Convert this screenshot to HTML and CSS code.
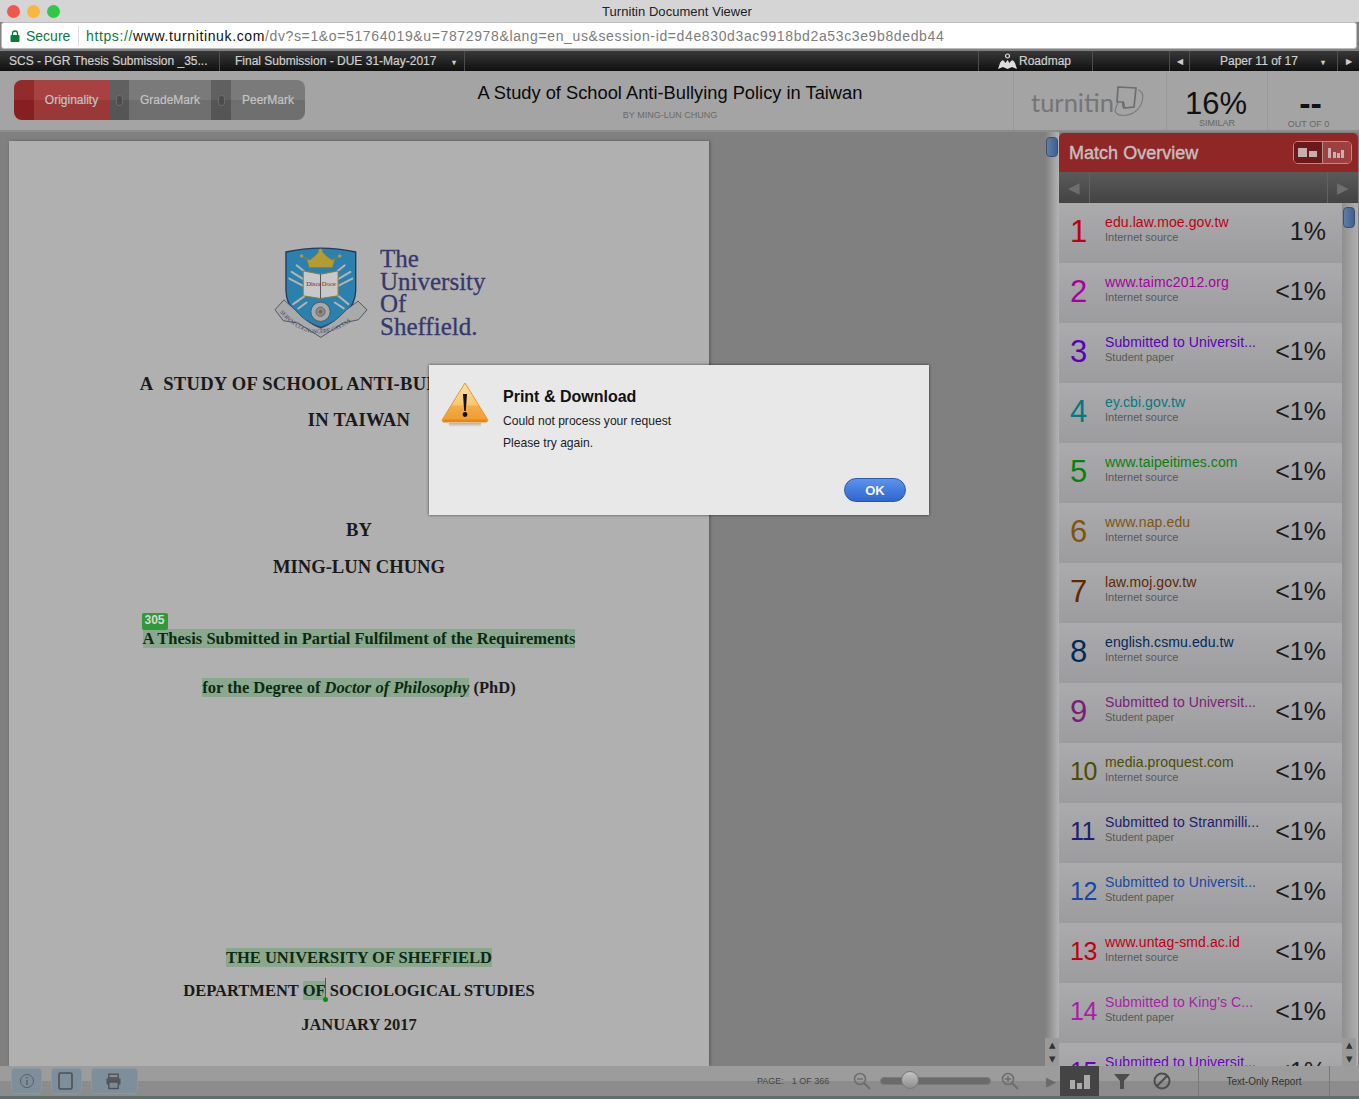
FILE: index.html
```html
<html>
<head>
  <title>Turnitin Document Viewer</title>
  <link rel="stylesheet" href="styles.css">
</head>
<body>
  <div class="titlebar">
    <div class="lights"><span class="light red"></span><span class="light yellow"></span><span class="light green"></span></div>
    <div class="window-title">Turnitin Document Viewer</div>
  </div>
  <div class="urlbar">
    <svg class="lock" width="10" height="12" viewBox="0 0 10 12"><path d="M2.5 5V3.5a2.5 2.5 0 0 1 5 0V5" fill="none" stroke="#0b7a3e" stroke-width="1.3"/><rect x="0.5" y="5" width="9" height="7" rx="1" fill="#0b7a3e"/></svg>
    <span class="secure">Secure</span>
    <span class="url"><span class="scheme">https://</span><span class="host">www.turnitinuk.com</span>/dv?s=1&amp;o=51764019&amp;u=7872978&amp;lang=en_us&amp;session-id=d4e830d3ac9918bd2a53c3e9b8dedb44</span>
  </div>

  <div class="navbar">
    <div class="nav-cell class-cell">SCS - PGR Thesis Submission _35...</div>
    <div class="nav-cell assign-cell">Final Submission - DUE 31-May-2017<span class="caret">&#9662;</span></div>
    <div class="nav-fill"></div>
    <div class="nav-cell roadmap-cell">
      <svg width="19" height="16" viewBox="0 0 19 16"><circle cx="9.5" cy="3" r="2" fill="none" stroke="#ddd" stroke-width="1.2"/><path d="M0 16 2 10Q4 6 6 8L7.5 10 9.5 7 11.5 10 13 8Q15 6 17 10L19 16 14 14 9.5 16 5 14z" fill="#ddd"/></svg>
      Roadmap
    </div>
    <div class="nav-cell prev-cell">&#9666;</div>
    <div class="nav-cell paper-cell">Paper 11 of 17<span class="caret caret-paper">&#9662;</span></div>
    <div class="nav-cell next-cell">&#9656;</div>
  </div>

  <div class="header">
    <div class="tabs">
      <div class="tab-handle red-handle"></div>
      <div class="tab tab-on tab-orig">Originality</div>
      <div class="tab-handle"><span class="slot"></span></div>
      <div class="tab tab-grade">GradeMark</div>
      <div class="tab-handle"><span class="slot"></span></div>
      <div class="tab tab-peer">PeerMark</div>
    </div>
    <div class="doc-title">
      <div class="doc-name">A Study of School Anti-Bullying Policy in Taiwan</div>
      <div class="doc-author">BY MING-LUN CHUNG</div>
    </div>
    <div class="brand">
      <span class="brand-name">turnitin</span>
      <svg class="brand-mark" width="45" height="45" viewBox="0 0 45 45">
        <path d="M8 7 26 8 24 27 14 28 13 22 7 22z" fill="none" stroke="#6e6e6e" stroke-width="1.7"/>
        <path d="M13 22 14 28" stroke="#6e6e6e" stroke-width="2.4"/>
        <path d="M28 10C36 12 33 25 26 31 18 37 7 37 5 31 5 28 7 25 8 23" fill="none" stroke="#7c7c7c" stroke-width="1.2"/>
      </svg>
    </div>
    <div class="score score-sim"><div class="score-num">16%</div><div class="score-label">SIMILAR</div></div>
    <div class="score score-grade"><div class="score-num bold-num">--</div><div class="score-label">OUT OF 0</div></div>
  </div>

  <div class="main">
    <div class="viewer">
      <div class="page">
        <div class="logo">
          <svg class="crest" width="97" height="93" viewBox="40 30 290 280">
            <path d="M78 48Q183 25 288 48V165Q285 240 183 276 80 240 78 165z" fill="#2b80ad" stroke="#23385f" stroke-width="4"/>
            <path d="M148 95 140 66 120 60 150 72 165 60 182 42 200 60 216 72 246 60 226 66 218 95z" fill="#b59c32" stroke="#8a7a2a" stroke-width="2"/>
            <circle cx="125" cy="60" r="5" fill="#b59c32"/>
            <circle cx="240" cy="60" r="5" fill="#b59c32"/>
            <circle cx="182" cy="44" r="6" fill="#b59c32"/>
            <g stroke="#b4b4b4" stroke-width="6" stroke-linecap="round">
              <path d="M110 88 140 112M95 108 130 130M88 128 130 150M255 88 225 112M272 108 235 130M278 128 235 150M100 205 135 180M115 218 140 200M266 205 235 180M252 218 225 200"/>
            </g>
            <path d="M130 105 182 115 235 105V180L182 188 130 180z" fill="#c8c8c8" stroke="#8e7b34" stroke-width="3"/>
            <path d="M182 115V188" stroke="#555" stroke-width="3"/>
            <text x="139" y="150" class="crest-motto">Disce</text>
            <text x="186" y="150" class="crest-motto">Doce</text>
            <circle cx="182" cy="228" r="29" fill="#a9a9a9" stroke="#444" stroke-width="2"/>
            <circle cx="182" cy="228" r="14" fill="#8a8a8a" stroke="#555" stroke-width="2"/>
            <circle cx="182" cy="228" r="5" fill="#6a6a3a"/>
            <path d="M45 222 72 192 105 222Q140 262 183 278 225 262 260 222L295 196 322 222 296 252 250 262Q215 285 183 305 150 285 115 262L70 255z" fill="#aaa" stroke="#3d4560" stroke-width="2.5"/>
            <path id="ribbon" d="M55 225Q120 300 183 292 250 290 312 222" fill="none"/>
            <text class="crest-ribbon"><textPath href="#ribbon" startOffset="2%">SERVM COGNOSCERE CAVSAS</textPath></text>
          </svg>
          <div class="logo-name">The<br>University<br>Of<br>Sheffield.</div>
        </div>

        <div class="doc-line wide-line gap-title">A&nbsp; STUDY OF SCHOOL ANTI-BULLYING POLICY</div>
        <div class="doc-line wide-line gap-12">IN TAIWAN</div>
        <div class="doc-line gap-by">BY</div>
        <div class="doc-line gap-13">MING-LUN CHUNG</div>
        <div class="doc-line small-line gap-thesis"><span class="hit thesis-hit"><span class="badge">305</span>A Thesis Submitted in Partial Fulfilment of the Requirements</span></div>
        <div class="doc-line small-line gap-degree"><span class="hit">for the Degree of <i>Doctor of Philosophy</i></span> (PhD)</div>
        <div class="doc-line small-line gap-uni"><span class="hit">THE UNIVERSITY OF SHEFFIELD</span></div>
        <div class="doc-line small-line gap-9">DEPARTMENT <span class="hit of-hit">OF<span class="pin"></span></span> SOCIOLOGICAL STUDIES</div>
        <div class="doc-line small-line gap-10">JANUARY 2017</div>
      </div>
    </div>

    <div class="vscroll">
      <div class="thumb"></div>
      <div class="scroll-btns"><div class="scroll-btn">&#9652;</div><div class="scroll-btn">&#9662;</div></div>
    </div>

    <div class="sidebar">
      <div class="side-head">
        <span class="side-title">Match Overview</span>
        <div class="view-toggle">
          <div class="toggle-btn toggle-on">
            <svg width="20" height="9" viewBox="0 0 20 9"><rect x="0" y="0" width="9" height="9" fill="#c4b0b0"/><rect x="11" y="3" width="8" height="6" fill="#c4b0b0"/></svg>
          </div>
          <div class="toggle-btn">
            <svg width="20" height="10" viewBox="0 0 20 10"><path d="M1 0h3v10H1zM6 4h3v6H6zM10 5h3v5h-3zM14 2h3v8h-3z" fill="#c8b0b0"/></svg>
          </div>
        </div>
      </div>
      <div class="side-pager">
        <span class="pager-arrow">&#9664;</span>
        <span class="pager-mid"></span>
        <span class="pager-arrow">&#9654;</span>
      </div>
      <div class="side-body">
        <div class="matches">
          <div class="match c1"><span class="match-num">1</span><div class="match-text"><div class="match-title">edu.law.moe.gov.tw</div><div class="match-type">Internet source</div></div><span class="match-pct">1%</span></div>
          <div class="match c2"><span class="match-num">2</span><div class="match-text"><div class="match-title">www.taimc2012.org</div><div class="match-type">Internet source</div></div><span class="match-pct">&lt;1%</span></div>
          <div class="match c3"><span class="match-num">3</span><div class="match-text"><div class="match-title">Submitted to Universit...</div><div class="match-type">Student paper</div></div><span class="match-pct">&lt;1%</span></div>
          <div class="match c4"><span class="match-num">4</span><div class="match-text"><div class="match-title">ey.cbi.gov.tw</div><div class="match-type">Internet source</div></div><span class="match-pct">&lt;1%</span></div>
          <div class="match c5"><span class="match-num">5</span><div class="match-text"><div class="match-title">www.taipeitimes.com</div><div class="match-type">Internet source</div></div><span class="match-pct">&lt;1%</span></div>
          <div class="match c6"><span class="match-num">6</span><div class="match-text"><div class="match-title">www.nap.edu</div><div class="match-type">Internet source</div></div><span class="match-pct">&lt;1%</span></div>
          <div class="match c7"><span class="match-num">7</span><div class="match-text"><div class="match-title">law.moj.gov.tw</div><div class="match-type">Internet source</div></div><span class="match-pct">&lt;1%</span></div>
          <div class="match c8"><span class="match-num">8</span><div class="match-text"><div class="match-title">english.csmu.edu.tw</div><div class="match-type">Internet source</div></div><span class="match-pct">&lt;1%</span></div>
          <div class="match c9"><span class="match-num">9</span><div class="match-text"><div class="match-title">Submitted to Universit...</div><div class="match-type">Student paper</div></div><span class="match-pct">&lt;1%</span></div>
          <div class="match c10"><span class="match-num two-digit">10</span><div class="match-text"><div class="match-title">media.proquest.com</div><div class="match-type">Internet source</div></div><span class="match-pct">&lt;1%</span></div>
          <div class="match c11"><span class="match-num two-digit">11</span><div class="match-text"><div class="match-title">Submitted to Stranmilli...</div><div class="match-type">Student paper</div></div><span class="match-pct">&lt;1%</span></div>
          <div class="match c12"><span class="match-num two-digit">12</span><div class="match-text"><div class="match-title">Submitted to Universit...</div><div class="match-type">Student paper</div></div><span class="match-pct">&lt;1%</span></div>
          <div class="match c13"><span class="match-num two-digit">13</span><div class="match-text"><div class="match-title">www.untag-smd.ac.id</div><div class="match-type">Internet source</div></div><span class="match-pct">&lt;1%</span></div>
          <div class="match c14"><span class="match-num two-digit">14</span><div class="match-text"><div class="match-title">Submitted to King's C...</div><div class="match-type">Student paper</div></div><span class="match-pct">&lt;1%</span></div>
          <div class="match c15"><span class="match-num two-digit">15</span><div class="match-text"><div class="match-title">Submitted to Universit...</div><div class="match-type">Student paper</div></div><span class="match-pct">&lt;1%</span></div>
        </div>
        <div class="side-scroll">
          <div class="thumb side-thumb"></div>
          <div class="scroll-btns"><div class="scroll-btn">&#9652;</div><div class="scroll-btn">&#9662;</div></div>
        </div>
      </div>
    </div>
  </div>

  <div class="footer">
    <div class="foot-btn foot-info">
      <svg width="16" height="16" viewBox="0 0 16 16"><circle cx="8" cy="8" r="6.5" fill="none" stroke="#5a5f63" stroke-width="1"/><path d="M8 4v1.5M8 7v5" stroke="#5a5f63" stroke-width="1.4"/></svg>
    </div>
    <div class="foot-btn foot-tablet">
      <svg width="15" height="18" viewBox="0 0 15 18"><rect x="1" y="1" width="13" height="16" rx="1.5" fill="none" stroke="#4d4f52" stroke-width="1.6"/></svg>
    </div>
    <div class="foot-btn foot-print">
      <svg width="15" height="17" viewBox="0 0 16 17"><rect x="3" y="0.7" width="10" height="4" fill="none" stroke="#4d4f52" stroke-width="1.4"/><rect x="0.5" y="5" width="15" height="7" rx="1" fill="#55575a"/><rect x="3" y="9" width="10" height="7" fill="#7d8891" stroke="#4d4f52" stroke-width="1.4"/></svg>
    </div>
    <div class="page-count"><span class="page-label">PAGE:</span>1 OF 366</div>
    <svg class="zoom-out" width="18" height="18" viewBox="0 0 18 18"><circle cx="7" cy="7" r="5.5" fill="none" stroke="#6e6e6e" stroke-width="1.6"/><path d="M4 7h6" stroke="#6e6e6e" stroke-width="1.4"/><path d="M11 11l6 6" stroke="#6e6e6e" stroke-width="2"/></svg>
    <div class="slider"><span class="knob"></span></div>
    <svg class="zoom-in" width="18" height="18" viewBox="0 0 18 18"><circle cx="7" cy="7" r="5.5" fill="none" stroke="#6e6e6e" stroke-width="1.6"/><path d="M4 7h6M7 4v6" stroke="#6e6e6e" stroke-width="1.4"/><path d="M11 11l6 6" stroke="#6e6e6e" stroke-width="2"/></svg>
    <div class="foot-arrow">&#9654;</div>
    <div class="foot-tool foot-active">
      <svg width="20" height="16" viewBox="0 0 20 16"><path d="M0 7h5v9H0zM7 10h5v6H7zM14 2h6v14h-6z" fill="#aaa"/></svg>
    </div>
    <div class="foot-tool tool-filter">
      <svg width="16" height="15" viewBox="0 0 16 15"><path d="M0 0h16L10 7v8H6V7z" fill="#4d4d4d"/></svg>
    </div>
    <div class="foot-tool tool-block">
      <svg width="18" height="18" viewBox="0 0 18 18"><circle cx="9" cy="9" r="7.5" fill="none" stroke="#4d4d4d" stroke-width="2"/><path d="M4 14 14 4" stroke="#4d4d4d" stroke-width="2"/></svg>
    </div>
    <div class="text-report">Text-Only Report</div>
  </div>
  <div class="footer-strip"></div>

  <div class="dialog">
    <svg class="warn" width="48" height="46" viewBox="0 0 48 46">
      <defs>
        <linearGradient id="warnFill" x1="0" y1="0" x2="0" y2="1"><stop offset="0" stop-color="#fce3a4"/><stop offset="0.55" stop-color="#f8c870"/><stop offset="0.6" stop-color="#f4ad48"/><stop offset="1" stop-color="#f09a2c"/></linearGradient>
        <linearGradient id="warnShade" x1="0" y1="0" x2="0" y2="1"><stop offset="0" stop-color="#999" stop-opacity="0.7"/><stop offset="1" stop-color="#999" stop-opacity="0"/></linearGradient>
      </defs>
      <rect x="8" y="41" width="32" height="4" fill="url(#warnShade)"/>
      <path d="M24 1 46.6 37.5a1.6 1.6 0 0 1-1.4 2.5H2.8a1.6 1.6 0 0 1-1.4-2.5z" fill="url(#warnFill)" stroke="#e8952c" stroke-width="1"/>
      <path d="M2 37.5h44l-.8 2.5H2.8z" fill="#e6851c"/>
      <path d="M22 12h4L24.8 29h-1.6z" fill="#111"/>
      <circle cx="24" cy="32.5" r="2.4" fill="#111"/>
    </svg>
    <div class="dialog-text">
      <div class="dialog-title">Print &amp; Download</div>
      <div class="dialog-msg">Could not process your request</div>
      <div class="dialog-msg">Please try again.</div>
    </div>
    <button class="ok-btn">OK</button>
  </div>
</body>
</html>
```

FILE: styles.css
```css
* {
  box-sizing: border-box;
}

body {
  margin: 0;
  width: 1359px;
  height: 1099px;
  overflow: hidden;
  display: flex;
  flex-direction: column;
  background: #808080;
  font-family: "Liberation Sans", Arial, sans-serif;
  color: #111;
}

/* window chrome */
.titlebar {
  height: 22px;
  flex: none;
  display: flex;
  align-items: center;
  background: #d5d5d5;
}

.lights {
  display: flex;
  gap: 7px;
  padding-left: 7px;
}

.light {
  width: 13px;
  height: 13px;
  border-radius: 50%;
}

.red { background: #f2544e; }
.yellow { background: #f6b73c; }
.green { background: #33c748; }

.window-title {
  width: 1234px;
  text-align: center;
  font-size: 13px;
  letter-spacing: 0.04px;
  color: #222;
}

.urlbar {
  height: 27px;
  flex: none;
  margin: 0 2px 2px 1px;
  padding-left: 8px;
  display: flex;
  align-items: center;
  background: #fff;
  border: 1px solid #bdbdbd;
  border-radius: 3px;
  font-size: 14px;
}

.lock {
  margin-right: 6px;
}

.secure {
  color: #0b7a3e;
  width: 53px;
  padding-right: 7px;
  border-right: 1px solid #ddd;
  margin-right: 7px;
  line-height: 20px;
}

.url {
  color: #7d7d7d;
  letter-spacing: 0.63px;
  white-space: nowrap;
}

.scheme { color: #0b7a3e; }
.host { color: #111; }

.navbar {
  height: 20px;
  flex: none;
  display: flex;
  background: linear-gradient(#383838, #101010);
  color: #cfcfcf;
  font-size: 12px;
  line-height: 20px;
  -webkit-text-stroke: 0.2px #cfcfcf;
}

.nav-cell {
  flex: none;
  border-right: 1px solid #4d4d4d;
  white-space: nowrap;
}

.nav-fill { flex: 1; }
.class-cell { width: 220px; padding-left: 9px; }
.assign-cell { width: 245px; padding-left: 15px; }
.roadmap-cell { width: 115px; padding-left: 19px; display: flex; align-items: center; gap: 2px; border-left: 1px solid #4d4d4d; }
.prev-cell { width: 21px; text-align: center; font-size: 12px; margin-left: 76px; border-left: 1px solid #4d4d4d; }
.paper-cell { width: 148px; padding-left: 30px; }
.next-cell { width: 21px; text-align: center; font-size: 12px; border-right: 0; }

.caret {
  font-size: 8px;
  margin-left: 16px;
}

.caret-paper {
  margin-left: 23px;
}

/* document header */
.header {
  height: 61px;
  flex: none;
  display: flex;
  background: #a4a4a4;
  border-bottom: 2px solid #8c8c8c;
}

.tabs {
  width: 291px;
  height: 40px;
  flex: none;
  margin: 9px 0 0 14px;
  display: flex;
  border-radius: 8px;
  overflow: hidden;
  font-size: 12px;
  color: #c4c4c4;
  -webkit-text-stroke: 0.2px #c4c4c4;
}

.tab,
.tab-handle {
  background-image: linear-gradient(rgba(255, 255, 255, 0.04) 50%, rgba(0, 0, 0, 0.06) 50%);
}

.tab {
  line-height: 40px;
  text-align: center;
  background-color: #757575;
}

.tab-handle {
  width: 20px;
  flex: none;
  background-color: #5a5a5a;
  display: flex;
  align-items: center;
  justify-content: center;
}

.red-handle { background-color: #8e2222; }
.tab-on { background-color: #a43a3a; }
.tab-orig { width: 75px; }
.tab-grade { width: 82px; }
.tab-peer { width: 74px; }

.slot {
  width: 7px;
  height: 11px;
  border-radius: 3px;
  background: #4c4c4c;
  border: 1px solid #6c6c6c;
}

.doc-title {
  width: 708px;
  flex: none;
  text-align: center;
  padding: 11px 0 0 22px;
}

.doc-name {
  font-size: 18.3px;
  line-height: 22px;
  color: #0a0a0a;
}

.doc-author {
  font-size: 9px;
  color: #6a6a6a;
  margin-top: 6px;
}

.brand {
  width: 153px;
  flex: none;
  border-left: 1px solid #999;
  display: flex;
  align-items: flex-start;
  padding: 16px 0 0 17px;
}

.brand-name {
  width: 79px;
  flex: none;
  font-family: Lato, "Liberation Sans", sans-serif;
  font-size: 25.5px;
  color: #757575;
  line-height: 30px;
}

.brand-mark {
  flex: none;
  margin-top: -7px;
}

.score {
  flex: none;
  border-left: 1px solid #999;
  text-align: center;
}

.score-sim { width: 101px; padding: 16px 2px 0 0; }
.score-grade { width: 82px; padding-top: 15px; }

.score-num {
  font-size: 31px;
  line-height: 34px;
  color: #111;
}

.bold-num {
  font-size: 34px;
  font-weight: bold;
  padding-left: 4px;
}

.score-label {
  font-size: 9px;
  color: #666;
  line-height: 10px;
  margin-top: -1px;
}

.score-sim .score-label {
  margin-top: -3px;
  padding-left: 2px;
}

/* body */
.main {
  flex: 1;
  display: flex;
  min-height: 0;
}

.viewer {
  width: 1045px;
  flex: none;
  padding: 9px 0 0 9px;
  background: #808080;
  overflow: hidden;
}

.page {
  width: 700px;
  height: 925px;
  background: #b0b0b0;
  box-shadow: 1px 0 3px #555;
  font-family: "Liberation Serif", "Times New Roman", serif;
  font-weight: bold;
  color: #1a1a1a;
  text-align: center;
}

.logo {
  display: flex;
  padding: 105px 0 0 264px;
  text-align: left;
  font-weight: normal;
}

.crest {
  flex: none;
}

.crest-motto {
  font-size: 20px;
  fill: #8a2020;
  font-family: "Liberation Serif", serif;
}

.crest-ribbon {
  font-size: 17px;
  fill: #3d4560;
  font-family: "Liberation Serif", serif;
}

.logo-name {
  margin: 2px 0 0 10px;
  font-size: 25px;
  line-height: 22.7px;
  color: #38386c;
  -webkit-text-stroke: 0.3px #38386c;
}

.doc-line {
  height: 24px;
  line-height: 24px;
  font-size: 18.6px;
  white-space: nowrap;
}

.wide-line { letter-spacing: 0.25px; }
.small-line { font-size: 16.5px; }

.gap-title { margin-top: 33px; }
.gap-12 { margin-top: 12px; }
.gap-by { margin-top: 86px; }
.gap-13 { margin-top: 13px; }
.gap-thesis { margin-top: 48px; }
.gap-degree { margin-top: 25px; }
.gap-uni { margin-top: 246px; }
.gap-9 { margin-top: 9px; }
.gap-10 { margin-top: 10px; }

.hit {
  background: #8ba88e;
  color: #0c2a12;
  position: relative;
}

.badge {
  position: absolute;
  left: -1px;
  top: -16px;
  width: 26px;
  height: 17px;
  background: #2f9a38;
  border-radius: 2px;
  color: #d8d8d8;
  font-family: "Liberation Sans", Arial, sans-serif;
  font-size: 12px;
  line-height: 15px;
}

.pin {
  position: absolute;
  right: 0;
  top: -3px;
  width: 1px;
  height: 22px;
  background: #0a8a1a;
}

.pin::after {
  content: "";
  position: absolute;
  left: -2px;
  bottom: -2px;
  width: 5px;
  height: 5px;
  border-radius: 50%;
  background: #0a8a1a;
}

.vscroll {
  width: 14px;
  flex: none;
  display: flex;
  flex-direction: column;
  align-items: center;
  padding-top: 5px;
  background: linear-gradient(90deg, #7f7f7f, #b4b4b4);
}

.thumb {
  width: 12px;
  height: 20px;
  flex: none;
  border-radius: 4px;
  background: linear-gradient(90deg, #5f7ea8, #3f5f8e);
  border: 1px solid #3c4f6c;
}

.scroll-btns {
  margin-top: auto;
  width: 100%;
}

.scroll-btn {
  height: 14px;
  line-height: 14px;
  font-size: 13px;
  text-align: center;
  color: #333;
  background: #9a9a9a;
}

/* match overview */
.sidebar {
  width: 300px;
  flex: none;
  display: flex;
  flex-direction: column;
  min-height: 0;
  padding-top: 1px;
  background: #808080;
}

.side-head {
  height: 39px;
  flex: none;
  display: flex;
  align-items: center;
  justify-content: space-between;
  padding: 0 6px 0 10px;
  margin-right: 1px;
  background: #8f2727;
  border-radius: 5px 5px 0 0;
}

.side-title {
  font-size: 18px;
  line-height: 22px;
  padding-top: 1px;
  letter-spacing: 0.02px;
  color: #c4c0c0;
  -webkit-text-stroke: 0.4px #c4c0c0;
}

.view-toggle {
  display: flex;
  width: 59px;
  height: 23px;
  border: 1px solid #b88c8c;
  border-radius: 5px;
  overflow: hidden;
}

.toggle-btn {
  flex: 1;
  display: flex;
  align-items: center;
  justify-content: center;
  background: #9c4040;
}

.toggle-on {
  background: #6a1a1a;
  border-right: 1px solid #b88c8c;
}

.side-pager {
  height: 31px;
  flex: none;
  margin-right: 1px;
  display: flex;
  align-items: center;
  background: linear-gradient(#5a5a5a, #434343);
  color: #6e6e6e;
  font-size: 15px;
}

.pager-arrow {
  width: 30px;
  text-align: center;
  line-height: 31px;
}

.pager-mid {
  flex: 1;
  height: 31px;
  border: solid #626262;
  border-width: 0 1px;
}

.side-body {
  flex: 1;
  display: flex;
  min-height: 0;
}

.matches {
  width: 283px;
  flex: none;
  overflow: hidden;
}

.match {
  height: 60px;
  display: flex;
  align-items: center;
  background: linear-gradient(#ababad, #9c9c9e);
}

.match-num {
  width: 46px;
  flex: none;
  padding: 0 0 3px 11px;
  font-size: 31px;
  letter-spacing: -0.5px;
}

.match-num.two-digit {
  font-size: 25px;
}

.match-text {
  width: 155px;
  flex: none;
  padding-bottom: 8px;
}

.match-title {
  font-size: 14px;
  line-height: 16px;
  letter-spacing: 0.1px;
  white-space: nowrap;
}

.match-type {
  font-size: 11px;
  line-height: 14px;
  color: #585858;
}

.match-pct {
  flex: 1;
  text-align: right;
  padding: 0 16px 4px 0;
  font-size: 25px;
  color: #1c1c1c;
}

.c1 { color: #c00010; }
.c2 { color: #a800a0; }
.c3 { color: #5a00b8; }
.c4 { color: #007a84; }
.c5 { color: #0a800a; }
.c6 { color: #80540f; }
.c7 { color: #602800; }
.c8 { color: #002a5a; }
.c9 { color: #781e78; }
.c10 { color: #4c4c00; }
.c11 { color: #20206a; }
.c12 { color: #1a46a0; }
.c13 { color: #c00010; }
.c14 { color: #a81ea8; }
.c15 { color: #6a00c8; }

.side-scroll {
  width: 16px;
  flex: none;
  display: flex;
  flex-direction: column;
  align-items: center;
  padding: 4px 2px 0 0;
  background: linear-gradient(90deg, #8e8e8e, #b0b0b0);
}

.side-thumb {
  width: 12px;
  height: 21px;
}

/* footer */
.footer {
  height: 30px;
  flex: none;
  display: flex;
  align-items: center;
  position: relative;
  background: linear-gradient(#9c9c9c 50%, #8c8c8c 50%);
  z-index: 1;
}

.foot-btn {
  height: 26px;
  flex: none;
  display: flex;
  align-items: center;
  justify-content: center;
  background: #7f8e9b;
  border-radius: 4px;
  border: 1px solid #8a97a2;
}

.foot-info { width: 31px; margin-left: 11px; }
.foot-tablet { width: 31px; margin-left: 9px; padding-right: 2px; }
.foot-print { width: 47px; margin-left: 9px; padding-right: 2px; }

.page-count {
  margin-left: 619px;
  width: 87px;
  flex: none;
  font-size: 9px;
  color: #444;
  white-space: nowrap;
}

.page-label {
  margin-right: 8px;
}

.zoom-out {
  margin: 0 0 0 9px;
  flex: none;
}

.slider {
  position: relative;
  width: 111px;
  height: 8px;
  flex: none;
  margin: 0 10px 0 9px;
  border-radius: 4px;
  background: #6a6a6a;
  border: 1px solid #7a7a7a;
}

.knob {
  position: absolute;
  left: 20px;
  top: -7px;
  width: 18px;
  height: 18px;
  border-radius: 50%;
  background: linear-gradient(#c4c4c4, #8e8e8e);
  border: 1px solid #777;
}

.zoom-in {
  flex: none;
}

.foot-arrow {
  width: 41px;
  flex: none;
  padding-left: 27px;
  font-size: 13px;
  color: #6a6a6a;
}

.foot-tool {
  width: 39px;
  height: 30px;
  flex: none;
  display: flex;
  align-items: center;
  justify-content: center;
}

.foot-active {
  background: #444;
}

.tool-filter { width: 46px; }
.tool-block { width: 34px; }

.text-report {
  width: 132px;
  height: 30px;
  flex: none;
  margin-left: 19px;
  border: solid #777;
  border-width: 0 1px;
  text-align: center;
  line-height: 32px;
  font-size: 10px;
  color: #333;
}

.footer-strip {
  height: 3px;
  flex: none;
  background: #5d6e6b;
}

/* alert */
.dialog {
  position: absolute;
  left: 429px;
  top: 365px;
  width: 500px;
  height: 150px;
  display: flex;
  padding: 17px 0 0 12px;
  background: #e8e8e8;
  box-shadow: 0 0 3px rgba(0, 0, 0, 0.6);
  z-index: 2;
}

.warn {
  flex: none;
}

.dialog-text {
  margin-left: 14px;
  padding-top: 5px;
}

.dialog-title {
  font-size: 16px;
  font-weight: bold;
  line-height: 19px;
  color: #111;
}

.dialog-msg {
  font-size: 12.1px;
  line-height: 14px;
  margin-top: 8px;
  color: #222;
}

.ok-btn {
  position: absolute;
  right: 23px;
  bottom: 13px;
  width: 62px;
  height: 24px;
  border-radius: 12px;
  border: 1px solid #2a5cab;
  background: linear-gradient(#5b93ec, #2e66d0);
  color: #f4f4f4;
  font-family: "Liberation Sans", Arial, sans-serif;
  font-size: 13px;
  font-weight: bold;
  padding: 0;
}
```
